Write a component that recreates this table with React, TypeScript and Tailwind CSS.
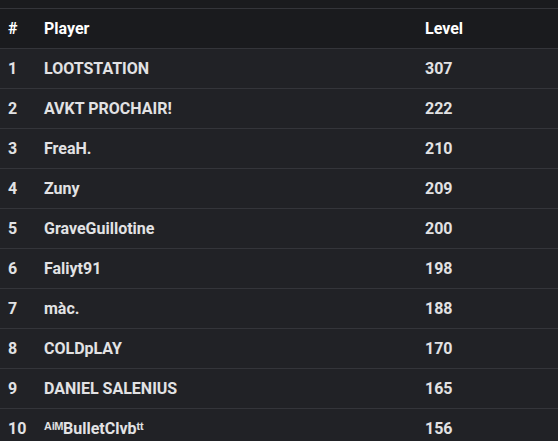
const players = [
  { rank: 1, name: 'LOOTSTATION', level: 307 },
  { rank: 2, name: 'AVKT PROCHAIR!', level: 222 },
  { rank: 3, name: 'FreaH.', level: 210 },
  { rank: 4, name: 'Zuny', level: 209 },
  { rank: 5, name: 'GraveGuillotine', level: 200 },
  { rank: 6, name: 'Faliyt91', level: 198 },
  { rank: 7, name: 'màc.', level: 188 },
  { rank: 8, name: 'COLDpLAY', level: 170 },
  { rank: 9, name: 'DANIEL SALENIUS', level: 165 },
  { rank: 10, name: 'ᴬⁱᴹBulletClvbᵗᵗ', level: 156 },
];

export default function App() {
  return (
    <div className="w-[558px] h-[441px] overflow-hidden bg-[#1a1b1e] pt-2 font-['Roboto',sans-serif] font-bold text-[16px]">
      <div className="flex h-10 items-center border-t border-[#34353a] bg-[#1a1b1e] text-white">
        <div className="w-11 pl-2">#</div>
        <div className="w-[381px]">Player</div>
        <div>Level</div>
      </div>
      {players.map(p => (
        <div key={p.rank} className="flex h-10 items-center border-t border-[#34353a] bg-[#212226] text-[#e2e2e4]">
          <div className="w-11 pl-2">{p.rank}</div>
          <div className="w-[381px]">{p.name}</div>
          <div>{p.level}</div>
        </div>
      ))}
    </div>
  );
}
